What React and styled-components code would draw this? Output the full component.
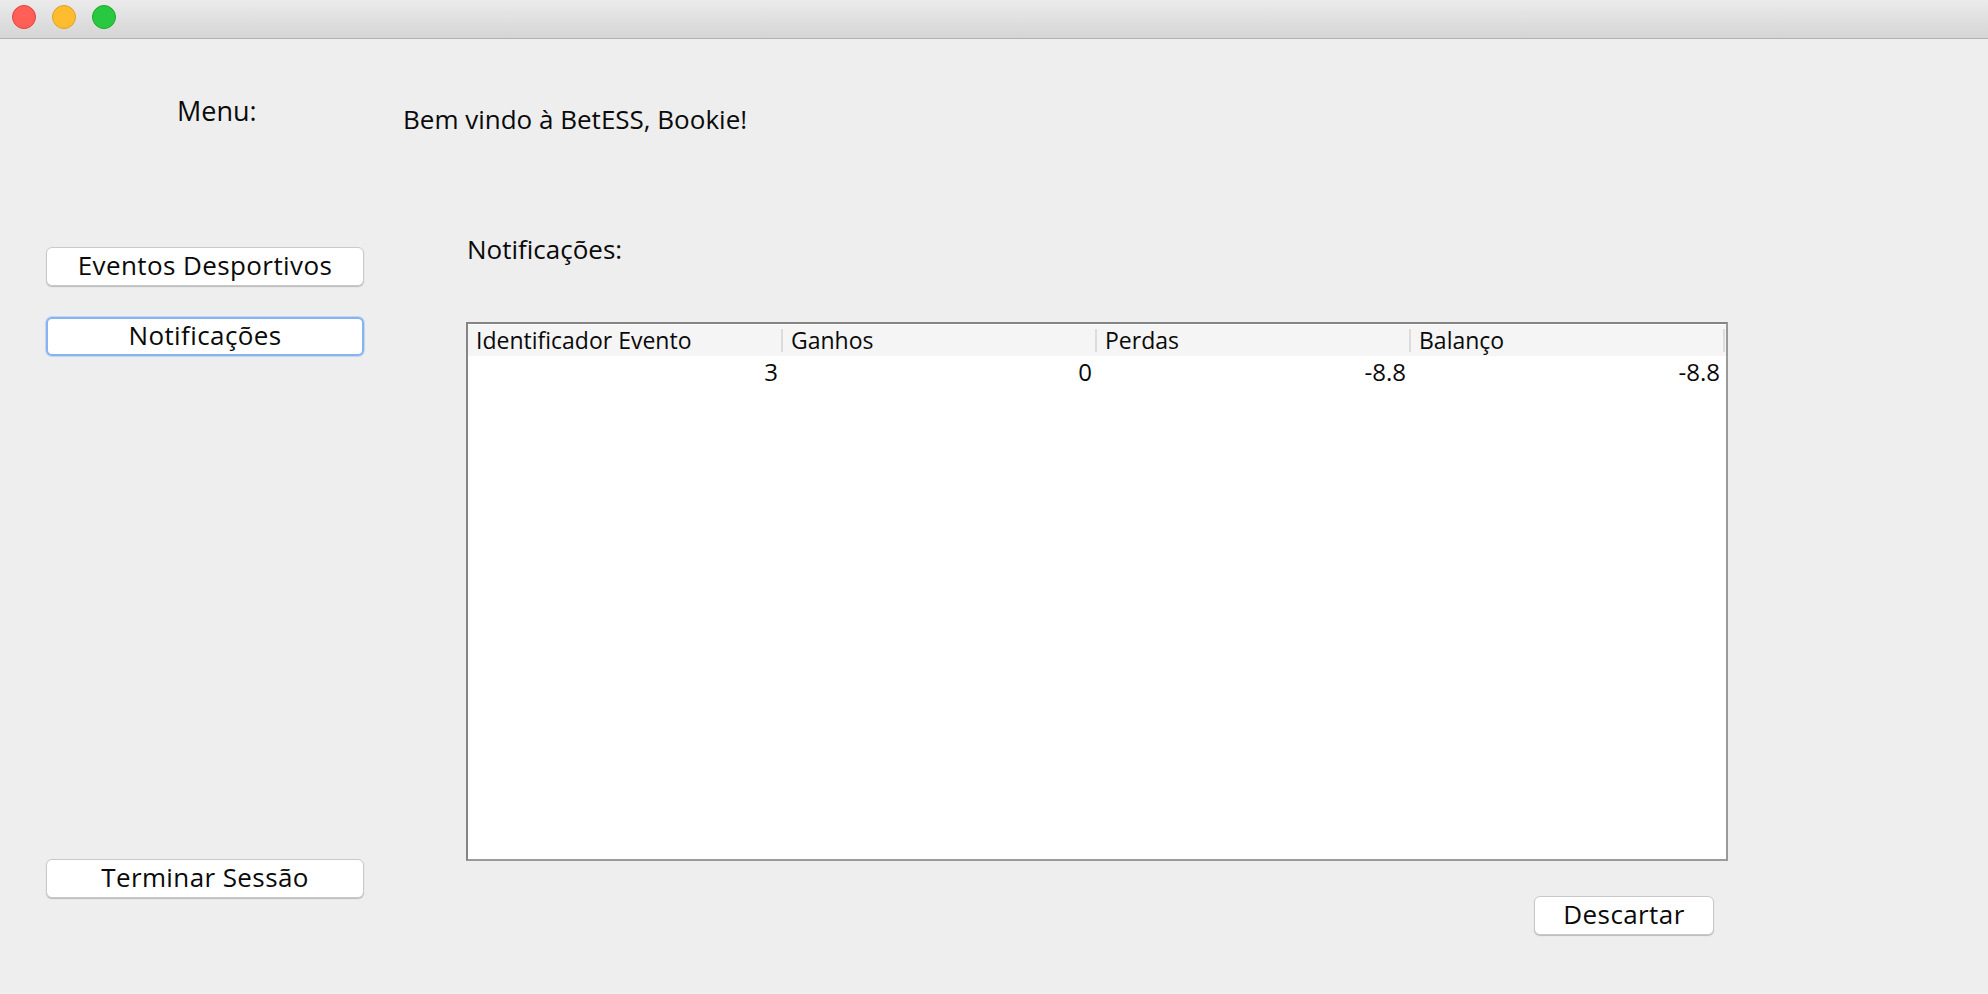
import styled, { createGlobalStyle } from "styled-components";

const Global = createGlobalStyle`
    html, body {
        margin: 0;
        padding: 0;
        background: #eeeeee;
    }
    body {
        font-family: "Open Sans", "DejaVu Sans", sans-serif;
        color: #0a0a0a;
    }
`;

const Janela = styled.div`
    width: 100%;
    height: 100vh;
    display: flex;
    flex-direction: column;
    background: #eeeeee;
    overflow: hidden;
`;

const BarraTitulo = styled.div`
    height: 38px;
    flex-shrink: 0;
    display: flex;
    align-items: center;
    gap: 16px;
    padding-left: 12px;
    background: linear-gradient(180deg, #ebebeb, #d5d5d5);
    border-bottom: 1px solid #b2b2b2;
`;

const Semaforo = styled.span`
    width: 22px;
    height: 22px;
    border-radius: 50%;
    margin-top: -4px;
    background: ${({$cor}) => $cor};
    border: 1px solid ${({$borda}) => $borda};
`;

const Conteudo = styled.div`
    flex: 1;
    display: flex;
`;

const ColunaMenu = styled.div`
    width: 403px;
    flex-shrink: 0;
    display: flex;
    flex-direction: column;
    padding-left: 46px;
    padding-bottom: 96px;
    box-sizing: border-box;
`;

const Rotulo = styled.div`
    font-size: ${({$size}) => $size || 26}px;
    line-height: ${({$lh}) => $lh || 36}px;
    margin-top: ${({$top}) => $top || 0}px;
    margin-left: ${({$left}) => $left || 0}px;
    white-space: nowrap;
`;

const Botao = styled.button`
    width: ${({$w}) => $w || 318}px;
    height: 39px;
    margin-top: ${({$top}) => $top || 0}px;
    display: flex;
    align-items: center;
    justify-content: center;
    padding: 0 0 4px 0;
    box-sizing: border-box;
    font-family: "Open Sans", "DejaVu Sans", sans-serif;
    font-size: 26px;
    letter-spacing: 0.4px;
    color: #0a0a0a;
    background: #ffffff;
    border: ${({$foco}) => $foco ? '2px solid #86b4f0' : '1px solid #c9c9c9'};
    border-radius: 6px;
    box-shadow: ${({$foco}) => $foco
        ? '0 0 0 1px rgba(120, 170, 240, 0.35)'
        : '0 1px 1px rgba(0, 0, 0, 0.22)'};
    cursor: default;

    &.ultimo {
        margin-top: auto;
    }
`;

const ColunaPrincipal = styled.div`
    flex: 1;
    display: flex;
    flex-direction: column;
`;

const Tabela = styled.div`
    width: 1262px;
    height: 539px;
    margin-top: 55px;
    margin-left: 63px;
    box-sizing: border-box;
    border: 2px solid #858585;
    border-right-color: #9a9a9a;
    border-bottom-color: #9a9a9a;
    background: #ffffff;
    padding-top: 1px;
`;

const Linha = styled.div`
    display: grid;
    grid-template-columns: 315px 314px 314px 314px;
    background: ${({$cabecalho}) => $cabecalho ? '#f5f5f5' : '#ffffff'};
`;

const Cabecalho = styled.div`
    position: relative;
    height: 31px;
    line-height: 31px;
    padding-left: 8px;
    font-size: 23px;
    white-space: nowrap;

    &::after {
        content: "";
        position: absolute;
        right: 0;
        top: 4px;
        bottom: 4px;
        width: 2px;
        background: #dcdcdc;
    }
`;

const Celula = styled.div`
    height: 32px;
    line-height: 32px;
    padding-right: 5px;
    text-align: right;
    font-size: 24px;
`;

const Rodape = styled.div`
    display: flex;
    justify-content: flex-end;
    width: 1262px;
    margin-left: 63px;
    margin-top: 35px;
    padding-right: 14px;
    box-sizing: border-box;
`;

const colunas = ['Identificador Evento', 'Ganhos', 'Perdas', 'Balanço'];
const notificacoes = [
    { id: 3, ganhos: '0', perdas: '-8.8', balanco: '-8.8' },
];

export default function App() {
    return (
        <>
            <Global />
            <Janela>
                <BarraTitulo>
                    <Semaforo $cor="#ff5f57" $borda="#e0443e" />
                    <Semaforo $cor="#febc2e" $borda="#dea123" />
                    <Semaforo $cor="#28c840" $borda="#1aab29" />
                </BarraTitulo>
                <Conteudo>
                    <ColunaMenu>
                        <Rotulo $size={27} $lh={37} $top={53} $left={131}>Menu:</Rotulo>
                        <Botao $top={118}>Eventos Desportivos</Botao>
                        <Botao $top={31} $foco>Notificações</Botao>
                        <Botao className="ultimo">Terminar Sessão</Botao>
                    </ColunaMenu>
                    <ColunaPrincipal>
                        <Rotulo $top={62}>Bem vindo à BetESS, Bookie!</Rotulo>
                        <Rotulo $top={94} $left={64}>Notificações:</Rotulo>
                        <Tabela>
                            <Linha $cabecalho>
                                {colunas.map((c) => <Cabecalho key={c}>{c}</Cabecalho>)}
                            </Linha>
                            {notificacoes.map((n) => (
                                <Linha key={n.id}>
                                    <Celula>{n.id}</Celula>
                                    <Celula>{n.ganhos}</Celula>
                                    <Celula>{n.perdas}</Celula>
                                    <Celula>{n.balanco}</Celula>
                                </Linha>
                            ))}
                        </Tabela>
                        <Rodape>
                            <Botao $w={180}>Descartar</Botao>
                        </Rodape>
                    </ColunaPrincipal>
                </Conteudo>
            </Janela>
        </>
    );
}
